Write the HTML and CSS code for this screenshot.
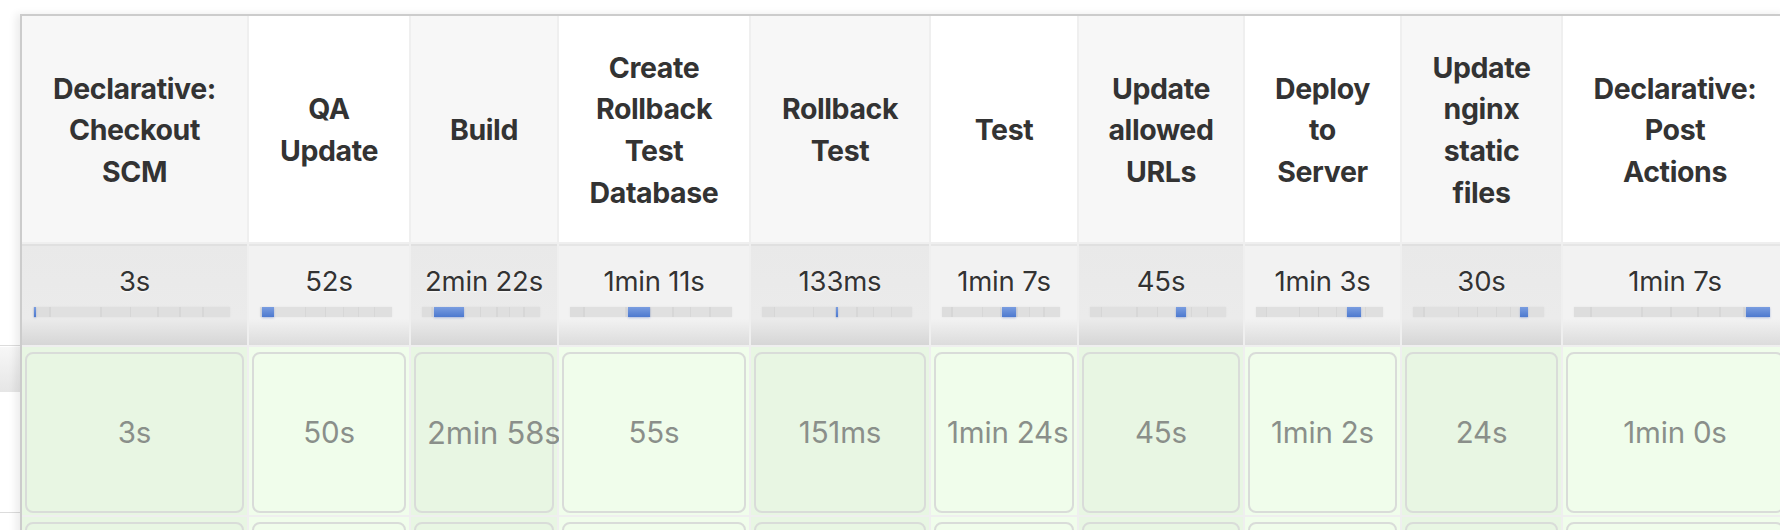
FILE: index.html
```html
<!DOCTYPE html>
<html>
<head>
<meta charset="utf-8">
<title>Stage View</title>
<link rel="stylesheet" href="styles.css">
</head>
<body>
<div class="page">
  <div class="under">
    <div class="under-line"></div>
    <div class="under-row"></div>
    <div class="under-space"></div>
    <div class="under-line"></div>
  </div>
  <div class="stage-view">
    <div class="head alt">Declarative:<br>Checkout<br>SCM</div>
    <div class="head">QA<br>Update</div>
    <div class="head alt">Build</div>
    <div class="head">Create<br>Rollback<br>Test<br>Database</div>
    <div class="head alt">Rollback<br>Test</div>
    <div class="head">Test</div>
    <div class="head alt">Update<br>allowed<br>URLs</div>
    <div class="head">Deploy<br>to<br>Server</div>
    <div class="head alt">Update<br>nginx<br>static<br>files</div>
    <div class="head">Declarative:<br>Post<br>Actions</div>

    <div class="avg alt"><div class="dur">3s</div><div class="bar"><span class="seg" style="left:0.5%;width:1.2%"></span></div></div>
    <div class="avg"><div class="dur">52s</div><div class="bar"><span class="seg" style="left:1.5%;width:9%"></span></div></div>
    <div class="avg alt"><div class="dur">2min 22s</div><div class="bar"><span class="seg" style="left:9.8%;width:25.8%"></span></div></div>
    <div class="avg"><div class="dur">1min 11s</div><div class="bar"><span class="seg" style="left:35.8%;width:13.6%"></span></div></div>
    <div class="avg alt"><div class="dur">133ms</div><div class="bar"><span class="seg" style="left:49.3%;width:1.3%"></span></div></div>
    <div class="avg"><div class="dur">1min 7s</div><div class="bar"><span class="seg" style="left:50.8%;width:11.9%"></span></div></div>
    <div class="avg alt"><div class="dur">45s</div><div class="bar"><span class="seg" style="left:63.2%;width:7.4%"></span></div></div>
    <div class="avg"><div class="dur">1min 3s</div><div class="bar"><span class="seg" style="left:71.4%;width:11.1%"></span></div></div>
    <div class="avg alt"><div class="dur">30s</div><div class="bar"><span class="seg" style="left:81.8%;width:6%"></span></div></div>
    <div class="avg"><div class="dur">1min 7s</div><div class="bar"><span class="seg" style="left:87.8%;width:12.2%"></span></div></div>

    <div class="cell alt"><div class="box">3s</div></div>
    <div class="cell"><div class="box">50s</div></div>
    <div class="cell alt"><div class="box big">2min 58s</div></div>
    <div class="cell"><div class="box">55s</div></div>
    <div class="cell alt"><div class="box">151ms</div></div>
    <div class="cell"><div class="box">1min 24s</div></div>
    <div class="cell alt"><div class="box">45s</div></div>
    <div class="cell"><div class="box">1min 2s</div></div>
    <div class="cell alt"><div class="box">24s</div></div>
    <div class="cell"><div class="box">1min 0s</div></div>

    <div class="cell alt"><div class="box"></div></div>
    <div class="cell"><div class="box"></div></div>
    <div class="cell alt"><div class="box"></div></div>
    <div class="cell"><div class="box"></div></div>
    <div class="cell alt"><div class="box"></div></div>
    <div class="cell"><div class="box"></div></div>
    <div class="cell alt"><div class="box"></div></div>
    <div class="cell"><div class="box"></div></div>
    <div class="cell alt"><div class="box"></div></div>
    <div class="cell"><div class="box"></div></div>
  </div>
</div>
</body>
</html>
```

FILE: styles.css
```css
html, body {
  margin: 0;
  padding: 0;
  background: #fff;
  overflow: hidden;
}
body {
  font-family: Inter, "Noto Sans", sans-serif;
  color: #333;
}
.page {
  display: flex;
  align-items: flex-start;
  padding-top: 14px;
  width: 1780px;
  height: 516px;
  overflow: hidden;
}
.under {
  flex: none;
  width: 20px;
  padding-top: 331px;
}
.under-line {
  height: 1px;
  background: #dcdcdc;
}
.under-row {
  height: 45px;
  margin-top: 1px;
  background: linear-gradient(#f7f7f7, #e6e6e6);
}
.under-space {
  height: 120px;
}
.stage-view {
  flex: none;
  display: grid;
  grid-template-columns: 225px 160px 146px 190px 178px 146px 164px 155px 159px 224px;
  grid-template-rows: 226px 101px 168px 168px;
  gap: 2px;
  background: #efefef;
  border-top: 2px solid #cccccc;
  border-left: 2px solid #cccccc;
  box-shadow: -4px 0 8px rgba(0, 0, 0, 0.08);
}
.head {
  display: flex;
  align-items: center;
  justify-content: center;
  text-align: center;
  font-weight: 700;
  font-size: 28.5px;
  letter-spacing: -0.4px;
  line-height: 41.6px;
  padding-top: 2px;
  background: #fff;
  color: #333;
}
.head.alt {
  background: #f7f7f7;
}
.avg {
  box-sizing: border-box;
  padding-top: 19px;
  text-align: center;
  background: linear-gradient(#f2f2f2 0%, #f2f2f2 74%, #dcdcdc 100%);
  box-shadow: inset 0 2px 0 #e6e6e6;
}
.avg.alt {
  background: linear-gradient(#e9e9e9 0%, #ebebeb 74%, #d6d6d6 100%);
  box-shadow: inset 0 2px 0 #e0e0e0;
}
.dur {
  font-size: 27.5px;
  line-height: 36px;
  letter-spacing: -0.2px;
  color: #333;
  white-space: nowrap;
  text-shadow: 0 1px 2px rgba(255, 255, 255, 0.9);
}
.bar {
  position: relative;
  height: 10px;
  margin: 8px 17px 0 11px;
  background: linear-gradient(90deg,
    #dddddd 0, #dddddd 8%, #d6d6d6 8%, #d6d6d6 9%,
    #e0e0e0 9%, #e0e0e0 34%, #d7d7d7 34%, #d7d7d7 35%,
    #dfdfdf 35%, #dfdfdf 49%, #d6d6d6 49%, #d6d6d6 50%,
    #e0e0e0 50%, #e0e0e0 63%, #d7d7d7 63%, #d7d7d7 64%,
    #dfdfdf 64%, #dfdfdf 74%, #d7d7d7 74%, #d7d7d7 75%,
    #e0e0e0 75%, #e0e0e0 86%, #d7d7d7 86%, #d7d7d7 87%,
    #dfdfdf 87%);
  box-shadow: 0 0 2px rgba(0, 0, 0, 0.06);
  filter: blur(0.4px);
}
.seg {
  position: absolute;
  top: 0;
  bottom: 0;
  min-width: 2px;
  background: linear-gradient(#7a9de0, #4d79cf);
  box-shadow: 0 1px 2px rgba(60, 100, 200, 0.35);
}
.cell {
  box-sizing: border-box;
  padding: 5px 3px 2px;
  background: #f0fdeb;
}
.cell.alt {
  background: #e8f6e3;
}
.box {
  box-sizing: border-box;
  height: 161px;
  padding: 0 11px;
  border: 2px solid #d9dcd9;
  border-radius: 8px;
  text-align: center;
  line-height: 157px;
  font-size: 29.5px;
  letter-spacing: -0.2px;
  color: #8a8f8a;
  white-space: nowrap;
}
.box.big {
  font-size: 31px;
}
```
